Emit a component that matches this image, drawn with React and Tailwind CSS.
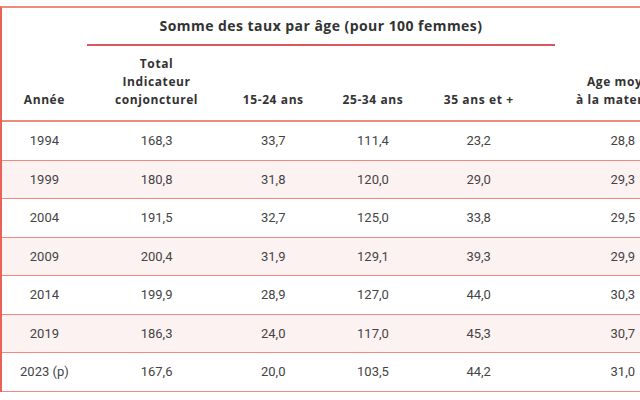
const cols = ["w-[85px]", "w-[140px]", "w-[94px]", "w-[106px]", "w-[106px]", "w-[183px]"];

const rows = [
  ["1994", "168,3", "33,7", "111,4", "23,2", "28,8"],
  ["1999", "180,8", "31,8", "120,0", "29,0", "29,3"],
  ["2004", "191,5", "32,7", "125,0", "33,8", "29,5"],
  ["2009", "200,4", "31,9", "129,1", "39,3", "29,9"],
  ["2014", "199,9", "28,9", "127,0", "44,0", "30,3"],
  ["2019", "186,3", "24,0", "117,0", "45,3", "30,7"],
  ["2023 (p)", "167,6", "20,0", "103,5", "44,2", "31,0"],
];

const heads = [
  ["Année"],
  ["Total", "Indicateur", "conjoncturel"],
  ["15-24 ans"],
  ["25-34 ans"],
  ["35 ans et +"],
  ["Age moyen", "à la maternité"],
];

export default function App() {
  return (
    <div className="w-[640px] h-[400px] overflow-hidden bg-white pt-[6px]">
      <div className="w-[714px] border-t-2 border-l-2 border-t-[#f08a7e] border-l-[#e8625a]">
        {/* title row */}
        <div className="h-[38px] flex">
          <div className="ml-[85px] w-[468px] border-b-2 border-[#dc5660] flex items-center justify-center pb-[2px]">
            <span className="font-['Open_Sans'] font-bold text-[14px] tracking-[0.45px] text-[#333]">
              Somme des taux par âge (pour 100 femmes)
            </span>
          </div>
        </div>
        {/* column headers */}
        <div className="flex h-[76px] border-b-2 border-[#f08a7e]">
          {heads.map((h, i) => (
            <div
              key={i}
              className={`${cols[i]} flex flex-col justify-end items-center pb-[11px] font-['Open_Sans'] font-bold text-[12px] leading-[18px] tracking-[0.6px] text-[#333]`}
            >
              {h.map((l) => (
                <span key={l}>{l}</span>
              ))}
            </div>
          ))}
        </div>
        {rows.map((r, ri) => (
          <div
            key={ri}
            className={`flex h-[38.5px] border-b-[1.5px] border-[#f08a7e] ${ri % 2 === 1 ? "bg-[#fdf2f2]" : "bg-white"}`}
          >
            {r.map((v, ci) => (
              <div
                key={ci}
                className={`${cols[ci]} flex items-center justify-center font-['Roboto'] text-[13px] text-[#444]`}
              >
                {v}
              </div>
            ))}
          </div>
        ))}
      </div>
    </div>
  );
}
